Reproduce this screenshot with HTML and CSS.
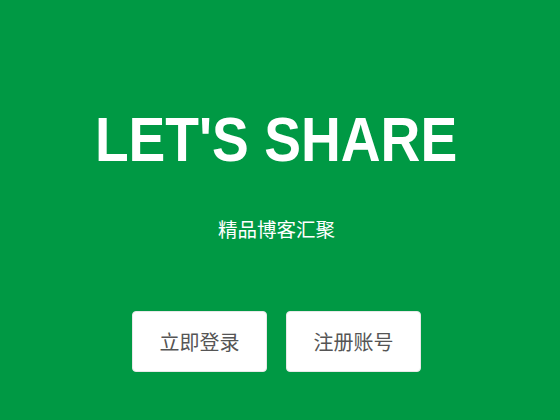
FILE: index.html
```html
<!DOCTYPE html>
<html lang="zh-CN">
<head>
<meta charset="utf-8">
<title>LET'S SHARE</title>
<link rel="stylesheet" href="styles.css">
</head>
<body>
<main class="hero">
  <h1 class="hero-title">LET'S SHARE</h1>
  <p class="hero-sub">精品博客汇聚</p>
  <div class="hero-actions">
    <a class="btn" href="#">立即登录</a>
    <a class="btn" href="#">注册账号</a>
  </div>
</main>
</body>
</html>
```
FILE: styles.css
```css
html, body {
  margin: 0;
  padding: 0;
  height: 100%;
}
body {
  background: #009944;
  font-family: "Liberation Sans", "Noto Sans CJK SC", sans-serif;
}
.hero {
  display: flex;
  flex-direction: column;
  align-items: center;
  padding: 108px 7px 0 0;
}
.hero-title {
  margin: 0;
  font-size: 63px;
  line-height: 63px;
  font-weight: bold;
  color: #fff;
  transform: scaleX(0.875);
  white-space: nowrap;
}
.hero-sub {
  margin: 48px 0 0;
  font-family: "Noto Sans CJK SC", sans-serif;
  font-size: 19.5px;
  line-height: 20px;
  color: #fff;
}
.hero-actions {
  display: flex;
  gap: 19px;
  margin-top: 72px;
}
.btn {
  display: flex;
  align-items: center;
  justify-content: center;
  width: 135px;
  height: 61px;
  box-sizing: border-box;
  background: #fff;
  border: 1px solid #e8e8e8;
  border-radius: 4px;
  font-family: "Noto Sans CJK SC", sans-serif;
  font-size: 20px;
  color: #555;
  text-decoration: none;
}
```
